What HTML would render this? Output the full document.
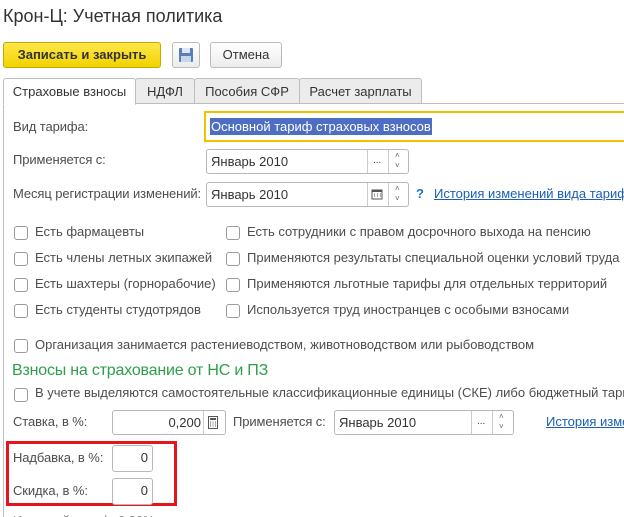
<!DOCTYPE html>
<html><head><meta charset="utf-8"><style>
*{box-sizing:border-box;margin:0;padding:0}
html,body{width:624px;height:517px;overflow:hidden}
body{background:#fff;font-family:"Liberation Sans",Arial,sans-serif;font-size:13px;color:#444;position:relative}
.a{position:absolute;white-space:nowrap}
.lbl{color:#4d4d4d;font-size:13px;letter-spacing:-0.1px}
.inp{position:absolute;border:1px solid #b8b8b8;border-radius:3px;background:#fff;height:25px;color:#333;font-size:13px;padding:4px 4px;white-space:nowrap;overflow:hidden}
.cb{position:absolute;width:14px;height:14px;border:1px solid #9a9a9a;border-radius:3px;background:#fff}
.ct{position:absolute;white-space:nowrap;color:#4d4d4d;font-size:13px}
.sep{position:absolute;top:0;bottom:0;border-left:1px solid #ccc}
.tab{position:absolute;top:78px;height:26px;border:1px solid #bdbdbd;background:#ececec;padding-top:5px;text-align:center;font-size:13px;color:#333;border-radius:3px 3px 0 0;white-space:nowrap}
.link{color:#1a5fb4;text-decoration:underline}
</style></head><body>
<div class="a" style="left:3px;top:6px;font-size:18px;color:#333">Крон-Ц: Учетная политика</div>
<div class="a" style="left:3px;top:42px;width:158px;height:26px;background:linear-gradient(#ffe84a,#f2d200);border:1px solid #c9a800;border-radius:3px;font-weight:bold;color:#333;text-align:center;line-height:24px;font-size:13px">Записать и закрыть</div>
<div class="a" style="left:172px;top:42px;width:28px;height:26px;border:1px solid #bbb;border-radius:3px;background:linear-gradient(#fff,#ececec)">
<svg width="26" height="24" viewBox="0 0 26 24"><rect x="6" y="5" width="14" height="14" rx="1" fill="#5a7fb0"/><rect x="9" y="5" width="8" height="5" fill="#dde6f2"/><rect x="8" y="13" width="10" height="6" fill="#c9d6e8"/></svg></div>
<div class="a" style="left:210px;top:42px;width:72px;height:26px;border:1px solid #bbb;border-radius:3px;background:linear-gradient(#fff,#ececec);text-align:center;line-height:24px;color:#333">Отмена</div>
<div class="a" style="left:3px;top:103px;width:700px;height:450px;border:1px solid #bdbdbd"></div>
<div class="tab" style="left:3px;width:133px;background:#fff;border-bottom-color:#fff;height:27px">Страховые взносы</div>
<div class="tab" style="left:135px;width:60px">НДФЛ</div>
<div class="tab" style="left:194px;width:106px">Пособия СФР</div>
<div class="tab" style="left:299px;width:123px">Расчет зарплаты</div>

<div class="a lbl" style="left:13px;top:119px">Вид тарифа:</div>
<div class="a" style="left:204px;top:111px;width:440px;height:31px;border:2px solid #f2c200"></div>
<div class="a" style="left:210px;top:118px;height:17px;background:#4e6ec4;color:#fff;padding:0 1px;font-size:13px;line-height:17px">Основной тариф страховых взносов</div>

<div class="a lbl" style="left:13px;top:152px">Применяется с:</div>
<div class="inp" style="left:206px;top:149px;width:203px">Январь 2010
<div class="sep" style="left:160px"></div><div class="a" style="left:166px;top:5px;font-size:10px">...</div>
<div class="sep" style="left:181px"></div><div class="a" style="left:188px;top:1px;font-size:8px;line-height:10px;color:#666">˄<br>˅</div></div>

<div class="a lbl" style="left:13px;top:186px">Месяц регистрации изменений:</div>
<div class="inp" style="left:206px;top:182px;width:203px">Январь 2010
<div class="sep" style="left:160px"></div><svg class="a" style="left:164px;top:5px" width="12" height="12"><rect x="1" y="2" width="10" height="9" fill="none" stroke="#555"/><rect x="1" y="2" width="10" height="2" fill="#555"/><path d="M3 6h1M6 6h1M9 6h1M3 8h1M6 8h1M9 8h1" stroke="#555"/></svg>
<div class="sep" style="left:181px"></div><div class="a" style="left:188px;top:1px;font-size:8px;line-height:10px;color:#666">˄<br>˅</div></div>
<div class="a" style="left:416px;top:186px;color:#1a73c8;font-weight:bold">?</div>
<div class="a link" style="left:434px;top:186px">История изменений вида тарифа</div>

<div class="cb" style="left:14px;top:226px"></div><div class="ct" style="left:35px;top:224px">Есть фармацевты</div>
<div class="cb" style="left:14px;top:252px"></div><div class="ct" style="left:35px;top:250px">Есть члены летных экипажей</div>
<div class="cb" style="left:14px;top:278px"></div><div class="ct" style="left:35px;top:276px">Есть шахтеры (горнорабочие)</div>
<div class="cb" style="left:14px;top:304px"></div><div class="ct" style="left:35px;top:302px">Есть студенты студотрядов</div>
<div class="cb" style="left:226px;top:226px"></div><div class="ct" style="left:247px;top:224px">Есть сотрудники с правом досрочного выхода на пенсию</div>
<div class="cb" style="left:226px;top:252px"></div><div class="ct" style="left:247px;top:250px">Применяются результаты специальной оценки условий труда</div>
<div class="cb" style="left:226px;top:278px"></div><div class="ct" style="left:247px;top:276px">Применяются льготные тарифы для отдельных территорий</div>
<div class="cb" style="left:226px;top:304px"></div><div class="ct" style="left:247px;top:302px">Используется труд иностранцев с особыми взносами</div>
<div class="cb" style="left:14px;top:339px"></div><div class="ct" style="left:35px;top:337px">Организация занимается растениеводством, животноводством или рыбоводством</div>

<div class="a" style="left:12px;top:362px;font-size:16px;color:#2e9e4a;letter-spacing:-0.2px">Взносы на страхование от НС и ПЗ</div>
<div class="cb" style="left:14px;top:388px"></div><div class="ct" style="left:35px;top:385px">В учете выделяются самостоятельные классификационные единицы (СКЕ) либо бюджетный тариф</div>

<div class="a lbl" style="left:13px;top:414px">Ставка, в %:</div>
<div class="inp" style="left:112px;top:410px;width:114px;text-align:right;padding-right:24px">0,200
<div class="sep" style="left:90px"></div><svg class="a" style="left:94px;top:5px" width="12" height="13"><rect x="1.5" y="0.5" width="9" height="12" fill="none" stroke="#555"/><rect x="3" y="2" width="6" height="2" fill="#555"/><path d="M3 6h1M5.5 6h1M8 6h1M3 8h1M5.5 8h1M8 8h1M3 10h1M5.5 10h1M8 10h1" stroke="#555"/></svg></div>
<div class="a lbl" style="left:233px;top:414px">Применяется с:</div>
<div class="inp" style="left:334px;top:410px;width:180px">Январь 2010
<div class="sep" style="left:136px"></div><div class="a" style="left:142px;top:5px;font-size:10px">...</div>
<div class="sep" style="left:157px"></div><div class="a" style="left:164px;top:1px;font-size:8px;line-height:10px;color:#666">˄<br>˅</div></div>
<div class="a link" style="left:546px;top:414px">История изменений</div>

<div class="a" style="left:6px;top:441px;width:171px;height:65px;border:3px solid #e8141c"></div>
<div class="a lbl" style="left:13px;top:450px">Надбавка, в %:</div>
<div class="inp" style="left:112px;top:445px;width:41px;height:27px;text-align:right">0</div>
<div class="a lbl" style="left:13px;top:483px">Скидка, в %:</div>
<div class="inp" style="left:112px;top:478px;width:41px;height:27px;text-align:right">0</div>
<div class="a lbl" style="left:13px;top:513px;color:#888">Итоговый тариф: 0,20%</div>
</body></html>
